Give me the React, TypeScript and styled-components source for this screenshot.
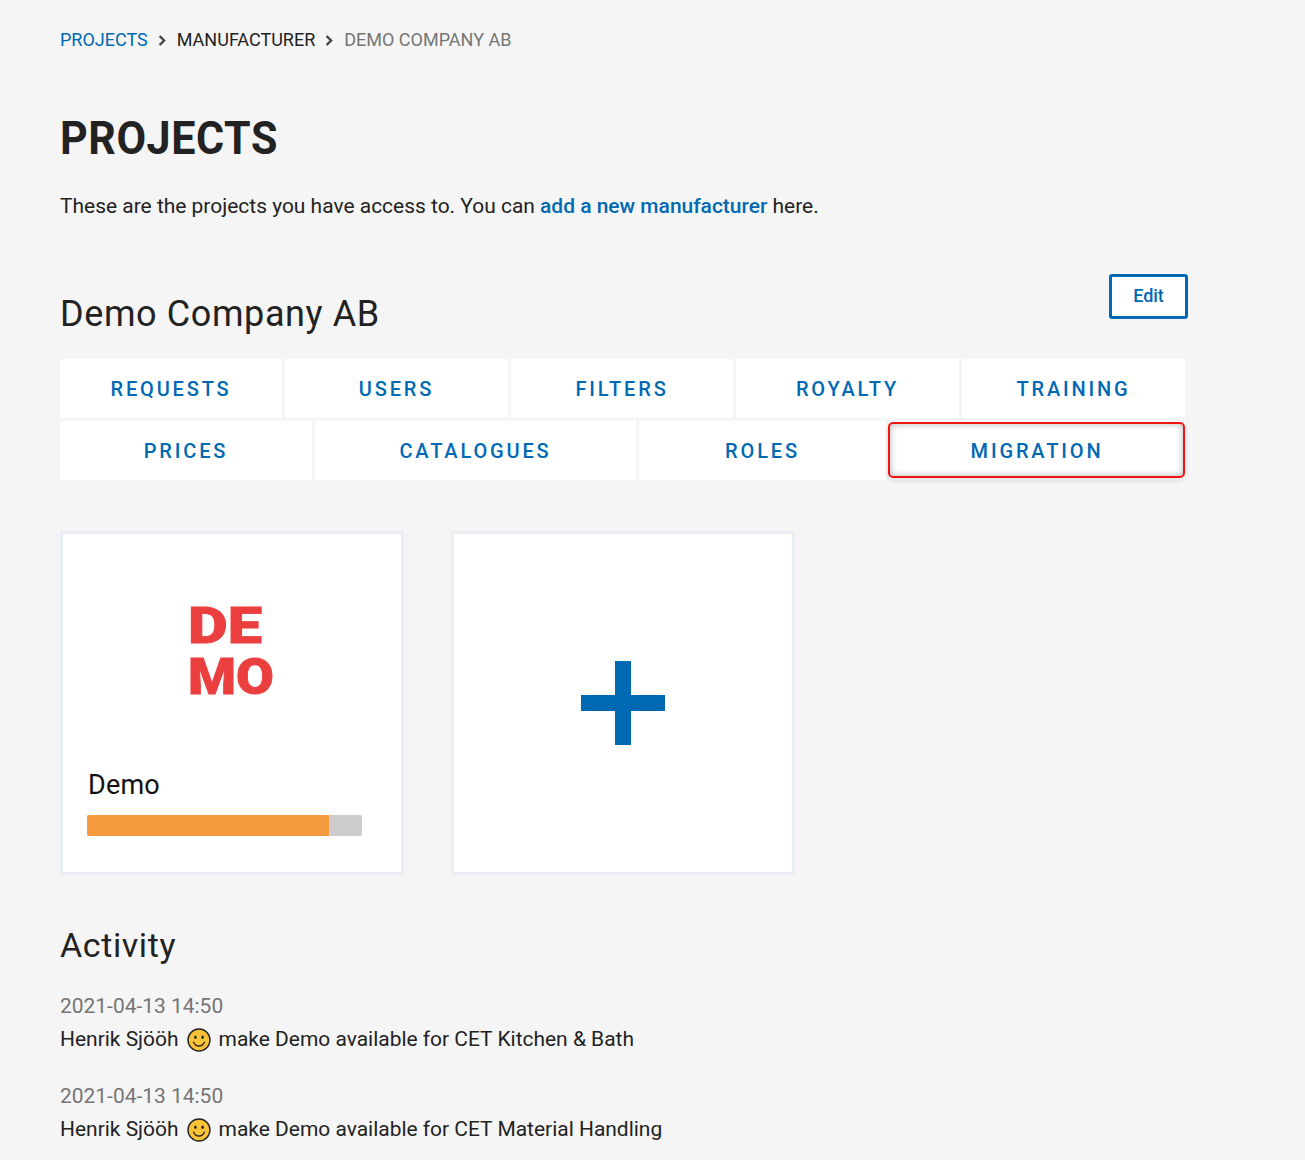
import React from "react";
import styled, { createGlobalStyle } from "styled-components";

const BLUE = "#0069b4";

const GlobalStyle = createGlobalStyle`
  html, body {
    margin: 0;
    padding: 0;
    background: #f5f5f5;
    color: #222;
    font-family: Roboto, "Liberation Sans", sans-serif;
    overflow: hidden;
  }
  * { box-sizing: border-box; }
`;

const Page = styled.div`
  width: 1305px;
  height: 1160px;
  padding: 28px 0 0 60px;
  overflow: hidden;
`;

const Breadcrumbs = styled.nav`
  display: flex;
  align-items: center;
  height: 22px;
  font-size: 18px;
`;

const Crumb = styled.a<{ $tone: string }>`
  color: ${(p) => p.$tone};
  text-transform: uppercase;
`;

const Chevron = styled.svg`
  width: 9px;
  height: 11px;
  margin: 3px 10px 0 10px;
`;

const PageTitle = styled.h1`
  margin: 59px 0 0;
  font-size: 46px;
  line-height: 58px;
  font-weight: 700;
  color: #222;
  letter-spacing: 0.6px;
  transform: scaleX(0.935);
  transform-origin: left center;
`;

const Intro = styled.p`
  margin: 24px 0 0;
  font-size: 20.96px;
  line-height: 30px;

  a {
    color: ${BLUE};
    font-weight: 500;
  }
`;

const CompanyHeader = styled.div`
  display: flex;
  justify-content: space-between;
  align-items: flex-start;
  width: 1128px;
  margin-top: 53px;
`;

const CompanyName = styled.h2`
  margin: 16px 0 0;
  font-size: 36px;
  line-height: 48px;
  font-weight: 400;
  color: #222;
  letter-spacing: 0.6px;
`;

const EditButton = styled.button`
  width: 79px;
  height: 45px;
  padding: 0 0 2px;
  background: #fff;
  border: 3px solid ${BLUE};
  border-radius: 3px;
  color: ${BLUE};
  font-family: inherit;
  font-size: 18px;
  font-weight: 500;
`;

const TabRows = styled.div`
  display: flex;
  flex-direction: column;
  gap: 3px;
  width: 1125px;
  margin-top: 21px;
`;

const TabRow = styled.div`
  display: flex;
  gap: 3px;
`;

const Tab = styled.a<{ $width: number; $marked?: boolean }>`
  position: relative;
  flex: 0 0 ${(p) => p.$width}px;
  height: 59px;
  display: flex;
  align-items: center;
  justify-content: center;
  background: #fff;
  color: ${BLUE};
  font-size: 20px;
  font-weight: 500;
  letter-spacing: 2.85px;
  ${(p) =>
    p.$marked &&
    `
    &::after {
      content: "";
      position: absolute;
      top: 1px;
      left: -1px;
      right: 0;
      bottom: 2px;
      border: 2px solid #f01414;
      border-radius: 5px;
      box-shadow: inset 0 0 7px rgba(0, 0, 0, 0.3), 0 2px 5px rgba(0, 0, 0, 0.14);
    }
  `}
`;

const Cards = styled.div`
  display: flex;
  gap: 47px;
  margin-top: 51px;
`;

const Card = styled.div`
  width: 344px;
  height: 344px;
  background: #fff;
  border: 3px solid #e8eef4;
  border-radius: 3px;
`;

const AddCard = styled(Card)`
  display: flex;
  align-items: center;
  justify-content: center;
`;

const Logo = styled.svg`
  display: block;
  width: 90px;
  height: 116px;
  margin: 59px auto 0;
  fill: #eb3f3f;
  stroke: #eb3f3f;
  stroke-width: 0.8px;
  font-family: Roboto, "Liberation Sans", sans-serif;
  font-size: 50px;
  font-weight: 900;
`;

const ProjectName = styled.div`
  margin: 59px 0 0 25px;
  font-size: 27px;
  line-height: 34px;
  letter-spacing: 0.2px;
  color: #111;
`;

const Progress = styled.div`
  width: 275px;
  height: 21px;
  margin: 13px 0 0 24px;
  background: #cdcdcd;
  border-radius: 2px;
  overflow: hidden;
`;

const ProgressFill = styled.div`
  height: 100%;
  background: #f59a3f;
`;

const ActivityTitle = styled.h2`
  margin: 46px 0 0;
  font-size: 34px;
  line-height: 48px;
  font-weight: 400;
  color: #222;
  letter-spacing: 0.6px;
`;

const ActivityList = styled.div`
  margin-top: 21px;
  display: flex;
  flex-direction: column;
  gap: 24px;
`;

const ActivityItem = styled.div`
  font-size: 20.96px;
  line-height: 33px;
`;

const Timestamp = styled.div`
  color: #757575;
`;

const ActivityLine = styled.div`
  display: flex;
  align-items: center;
  gap: 8px;
  color: #222;
`;

const Smiley = () => (
  <svg width="24" height="24" viewBox="0 0 24 24">
    <circle cx="12" cy="12" r="11" fill="#fbc235" stroke="#222" strokeWidth="1.4" />
    <ellipse cx="8.4" cy="9.2" rx="1.2" ry="1.8" fill="#222" />
    <ellipse cx="15.6" cy="9.2" rx="1.2" ry="1.8" fill="#222" />
    <path d="M6.6 14.2c1.2 2.6 3.2 3.8 5.4 3.8s4.2-1.2 5.4-3.8" fill="none" stroke="#222" strokeWidth="1.3" strokeLinecap="round" />
  </svg>
);

const BreadcrumbChevron = () => (
  <Chevron viewBox="0 0 9 11">
    <path d="M1.6 1l4.5 4.5L1.6 10" fill="none" stroke="#444" strokeWidth="2.4" />
  </Chevron>
);

const PlusIcon = () => (
  <svg width="84" height="84" viewBox="0 0 84 84">
    <path d="M34 0h16v34h34v16H50v34H34V50H0V34h34z" fill={BLUE} />
  </svg>
);

const rowOne = [
  { label: "REQUESTS", width: 222 },
  { label: "USERS", width: 223 },
  { label: "FILTERS", width: 222 },
  { label: "ROYALTY", width: 223 },
  { label: "TRAINING", width: 223 },
];

const rowTwo = [
  { label: "PRICES", width: 252 },
  { label: "CATALOGUES", width: 321 },
  { label: "ROLES", width: 247 },
  { label: "MIGRATION", width: 296, marked: true },
];

const activity = [
  { time: "2021-04-13 14:50", text: "make Demo available for CET Kitchen & Bath" },
  { time: "2021-04-13 14:50", text: "make Demo available for CET Material Handling" },
];

export default function App() {
  return (
    <Page>
      <GlobalStyle />
      <Breadcrumbs>
        <Crumb $tone={BLUE}>Projects</Crumb>
        <BreadcrumbChevron />
        <Crumb $tone="#222">Manufacturer</Crumb>
        <BreadcrumbChevron />
        <Crumb $tone="#757575">Demo Company AB</Crumb>
      </Breadcrumbs>

      <PageTitle>PROJECTS</PageTitle>
      <Intro>
        These are the projects you have access to. You can <a>add a new manufacturer</a> here.
      </Intro>

      <CompanyHeader>
        <CompanyName>Demo Company AB</CompanyName>
        <EditButton>Edit</EditButton>
      </CompanyHeader>

      <TabRows>
        <TabRow>
          {rowOne.map((t) => (
            <Tab key={t.label} $width={t.width}>{t.label}</Tab>
          ))}
        </TabRow>
        <TabRow>
          {rowTwo.map((t) => (
            <Tab key={t.label} $width={t.width} $marked={t.marked}>{t.label}</Tab>
          ))}
        </TabRow>
      </TabRows>

      <Cards>
        <Card>
          <Logo viewBox="0 0 90 116">
            <text x="1" y="50" textLength="74" lengthAdjust="spacingAndGlyphs">DE</text>
            <text x="1" y="101" textLength="86" lengthAdjust="spacingAndGlyphs">MO</text>
          </Logo>
          <ProjectName>Demo</ProjectName>
          <Progress>
            <ProgressFill style={{ width: "88%" }} />
          </Progress>
        </Card>
        <AddCard>
          <PlusIcon />
        </AddCard>
      </Cards>

      <ActivityTitle>Activity</ActivityTitle>
      <ActivityList>
        {activity.map((a) => (
          <ActivityItem key={a.text}>
            <Timestamp>{a.time}</Timestamp>
            <ActivityLine>
              Henrik Sjööh <Smiley /> {a.text}
            </ActivityLine>
          </ActivityItem>
        ))}
      </ActivityList>
    </Page>
  );
}
